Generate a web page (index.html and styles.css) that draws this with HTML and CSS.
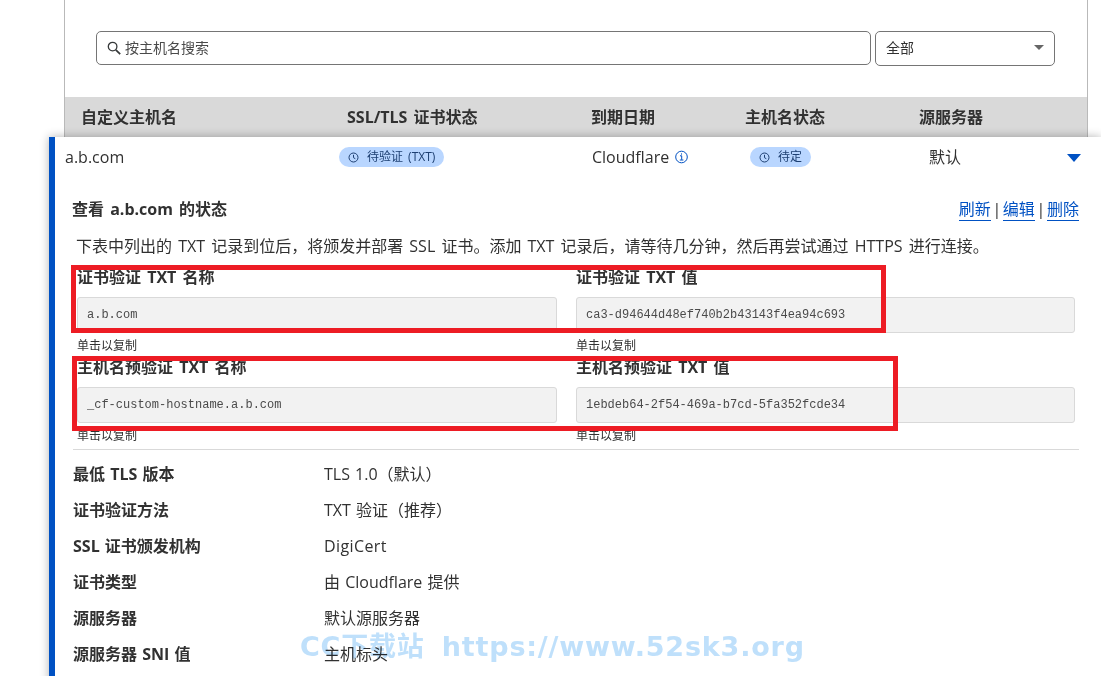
FILE: index.html
```html
<!DOCTYPE html>
<html lang="zh-CN">
<head>
    <meta charset="UTF-8">
    <meta name="viewport" content="width=device-width, initial-scale=1.0">
    <title>自定义主机名</title>
    <link rel="stylesheet" href="styles.css">
</head>
<body>
    <!-- Filters and table header -->
    <div class="panel">
        <div class="filters">
            <div class="search-box">
                <svg class="search-icon" width="14" height="14" viewBox="0 0 14 14" fill="none" stroke="#36393a" stroke-width="1.3"><circle cx="5.6" cy="5.6" r="4.3"/><path d="M8.8 8.8l4.4 4.4" stroke-width="1.7"/></svg>
                <span>按主机名搜索</span>
            </div>
            <div class="select-box">
                <span>全部</span>
                <span class="select-arrow"></span>
            </div>
        </div>
        <div class="table-head">
            <div>自定义主机名</div>
            <div>SSL/TLS 证书状态</div>
            <div>到期日期</div>
            <div>主机名状态</div>
            <div>源服务器</div>
        </div>
    </div>

    <!-- Expanded row -->
    <div class="card">
        <div class="row">
            <div>a.b.com</div>
            <div class="cell-pill">
                <span class="pill">
                    <svg width="11" height="11" viewBox="0 0 11 11" fill="none" stroke="#1d3f72"><circle cx="5.5" cy="5.5" r="4.5"/><path d="M5.5 2.8v2.9l1.8 1"/></svg>
                    待验证 (TXT)
                </span>
            </div>
            <div class="cell-info">
                Cloudflare
                <svg width="13" height="14" viewBox="0 0 13 14" fill="none" stroke="#0051c3"><circle cx="6.5" cy="7" r="5.8"/><path d="M5 5.8h1.7v4M4.8 10h3.6M6.5 3.4v1.2"/></svg>
            </div>
            <div class="cell-pill">
                <span class="pill">
                    <svg width="11" height="11" viewBox="0 0 11 11" fill="none" stroke="#1d3f72"><circle cx="5.5" cy="5.5" r="4.5"/><path d="M5.5 2.8v2.9l1.8 1"/></svg>
                    待定
                </span>
            </div>
            <div>默认</div>
            <div class="expand-arrow"></div>
        </div>

        <div class="status-head">
            <div class="status-title">查看 a.b.com 的状态</div>
            <div class="status-links">
                <a href="#">刷新</a> | <a href="#">编辑</a> | <a href="#">删除</a>
            </div>
        </div>

        <p class="status-desc">下表中列出的 TXT 记录到位后，将颁发并部署 SSL 证书。添加 TXT 记录后，请等待几分钟，然后再尝试通过 HTTPS 进行连接。</p>

        <div class="records">
            <div class="record">
                <div class="record-label">证书验证 TXT 名称</div>
                <div class="record-value">a.b.com</div>
                <div class="record-hint">单击以复制</div>
            </div>
            <div class="record">
                <div class="record-label">证书验证 TXT 值</div>
                <div class="record-value">ca3-d94644d48ef740b2b43143f4ea94c693</div>
                <div class="record-hint">单击以复制</div>
            </div>
            <div class="record">
                <div class="record-label">主机名预验证 TXT 名称</div>
                <div class="record-value">_cf-custom-hostname.a.b.com</div>
                <div class="record-hint">单击以复制</div>
            </div>
            <div class="record">
                <div class="record-label">主机名预验证 TXT 值</div>
                <div class="record-value">1ebdeb64-2f54-469a-b7cd-5fa352fcde34</div>
                <div class="record-hint">单击以复制</div>
            </div>
        </div>

        <div class="details">
            <div class="detail-label">最低 TLS 版本</div><div>TLS 1.0（默认）</div>
            <div class="detail-label">证书验证方法</div><div>TXT 验证（推荐）</div>
            <div class="detail-label">SSL 证书颁发机构</div><div class="detail-latin">DigiCert</div>
            <div class="detail-label">证书类型</div><div>由 Cloudflare 提供</div>
            <div class="detail-label">源服务器</div><div>默认源服务器</div>
            <div class="detail-label">源服务器 SNI 值</div><div>主机标头</div>
        </div>
    </div>

    <!-- Annotations drawn over the screenshot -->
    <div class="mark mark-one"></div>
    <div class="mark mark-two"></div>
    <div class="watermark">CC下载站 https://www.52sk3.org</div>
</body>
</html>
```

FILE: styles.css
```css
html, body {
    height: 676px;
    overflow: hidden;
}
body {
    margin: 0;
    position: relative;
    background-color: #fff;
    color: #313131;
    font-family: "Open Sans", "Noto Sans CJK SC", sans-serif;
    font-size: 16px;
    line-height: 24px;
    word-spacing: 2px;
}
.panel {
    box-sizing: border-box;
    margin-left: 64px;
    width: 1024px;
    height: 137px;
    padding-top: 31px;
    border-left: 1px solid #b9b9b9;
    border-right: 1px solid #b9b9b9;
}
.filters {
    display: flex;
    gap: 4px;
    padding-left: 31px;
    height: 34px;
    font-size: 14px;
}
.search-box {
    box-sizing: border-box;
    width: 775px;
    height: 34px;
    display: flex;
    align-items: center;
    gap: 4px;
    padding-left: 10px;
    border: 1px solid #757575;
    border-radius: 5px;
    color: #4a4a4a;
}
.search-icon {
    flex-shrink: 0;
}
.select-box {
    box-sizing: border-box;
    width: 180px;
    height: 35px;
    display: flex;
    align-items: center;
    justify-content: space-between;
    padding: 0 10px 2px;
    border: 1px solid #757575;
    border-radius: 5px;
}
.select-arrow {
    width: 0;
    height: 0;
    border-left: 5px solid transparent;
    border-right: 5px solid transparent;
    border-top: 5px solid #666;
}
.table-head {
    display: grid;
    grid-template-columns: 266px 244px 154px 174px 1fr;
    align-items: center;
    height: 40px;
    margin-top: 32px;
    padding-left: 16px;
    background-color: #d9d9d9;
    font-weight: 700;
}
.card {
    box-sizing: border-box;
    position: relative;
    margin-left: 49px;
    height: 560px;
    padding-right: 22px;
    border-left: 6px solid #0051c3;
    background-color: #fff;
    box-shadow: 0 0 9px rgba(0, 0, 0, 0.3);
}
.row {
    display: grid;
    grid-template-columns: 274px 253px 158px 179px 138px 13px;
    align-items: center;
    height: 40px;
    padding-left: 10px;
}
.cell-pill {
    display: flex;
}
.pill {
    display: inline-flex;
    align-items: center;
    gap: 8px;
    height: 20px;
    padding: 0 9px;
    border-radius: 10px;
    background-color: #b9d6ff;
    color: #1d3f72;
    font-size: 12px;
    line-height: 20px;
}
.cell-info {
    display: flex;
    align-items: center;
    gap: 6px;
}
.expand-arrow {
    width: 0;
    height: 0;
    margin-top: 2px;
    border-left: 7px solid transparent;
    border-right: 7px solid transparent;
    border-top: 8px solid #0051c3;
}
.status-head {
    display: flex;
    justify-content: space-between;
    margin-top: 20px;
    padding-left: 17px;
}
.status-title {
    font-weight: 700;
}
.status-links {
    word-spacing: -2.5px;
}
.status-links a {
    color: #0051c3;
    text-decoration: none;
    border-bottom: 1px solid #0051c3;
}
.status-desc {
    margin: 13px 0 0;
    padding-left: 21px;
    white-space: nowrap;
}
.records {
    display: grid;
    grid-template-columns: 480px 499px;
    column-gap: 19px;
    margin-top: 7px;
    padding-left: 22px;
}
.record-label {
    font-weight: 700;
}
.record-value {
    box-sizing: border-box;
    height: 36px;
    margin-top: 8px;
    padding-left: 9px;
    border: 1px solid #d9d9d9;
    border-radius: 3px;
    background-color: #f2f2f2;
    color: #4a4a4a;
    font-family: "Liberation Mono", monospace;
    font-size: 12px;
    line-height: 34px;
}
.record-hint {
    margin: 5px 0 1px;
    font-size: 12px;
    line-height: 16px;
}
.details {
    display: grid;
    grid-template-columns: 251px 1fr;
    grid-auto-rows: 36px;
    align-items: center;
    margin-top: 4px;
    margin-left: 18px;
    padding-top: 6px;
    border-top: 1px solid #d9d9d9;
    word-spacing: 1px;
}
.detail-label {
    font-weight: 700;
}
.detail-latin {
    letter-spacing: 0.4px;
}
.mark {
    position: absolute;
    box-sizing: border-box;
    border: 5px solid #ed1c24;
}
.mark-one {
    left: 71px;
    top: 265px;
    width: 815px;
    height: 68px;
}
.mark-two {
    left: 72px;
    top: 356px;
    width: 826px;
    height: 75px;
}
.watermark {
    position: absolute;
    left: 300px;
    top: 628px;
    color: #bfe0fb;
    font-family: "DejaVu Sans", "Noto Sans CJK SC", sans-serif;
    font-size: 27px;
    font-weight: 700;
    line-height: 38px;
    letter-spacing: 0.8px;
    word-spacing: 7px;
    white-space: nowrap;
    mix-blend-mode: multiply;
}
```
